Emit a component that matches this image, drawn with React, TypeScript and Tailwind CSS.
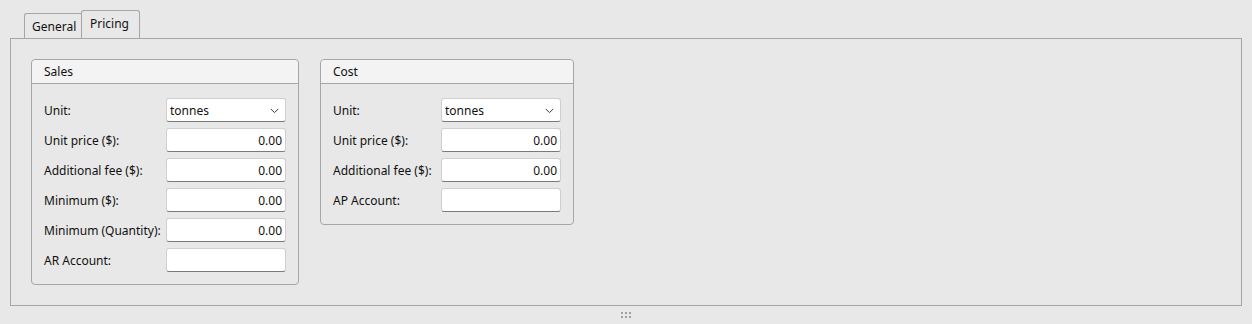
import React from "react";

const font = { fontFamily: '"Noto Sans", "Open Sans", sans-serif' };

function Chevron() {
  return (
    <svg width="9" height="6" viewBox="0 0 9 6" className="shrink-0">
      <path d="M0.8 1 L4.5 4.6 L8.2 1" fill="none" stroke="#3a3a3a" strokeWidth="1" />
    </svg>
  );
}

function Field({ kind, value }: { kind: "select" | "num" | "text"; value?: string }) {
  const base =
    "h-[24px] w-[120px] bg-white border border-[#cfcfcf] border-b-[#7a7a7a] rounded-[3px] flex items-center text-[12px] text-[#111111] pt-[1px]";
  if (kind === "select") {
    return (
      <div className={base + " pl-[3px] pr-[6px] justify-between"}>
        <span>{value}</span>
        <Chevron />
      </div>
    );
  }
  if (kind === "num") {
    return <div className={base + " pr-[3px] justify-end"}>{value}</div>;
  }
  return <div className={base} />;
}

type Row = { label: string; kind: "select" | "num" | "text"; value?: string };

function Group({
  title,
  rows,
  labelWidth,
  width,
}: {
  title: string;
  rows: Row[];
  labelWidth: string;
  width: string;
}) {
  return (
    <div className={"border border-[#a6a6a6] rounded-[4px] bg-[#e8e8e8] " + width}>
      <div className="h-[24px] bg-[#f3f3f3] border-b border-[#a6a6a6] rounded-t-[4px] pl-[12px] pt-[1px] flex items-center text-[12px] text-[#111111]">
        {title}
      </div>
      <div className="pt-[14px] pb-[12px] pl-[12px] pr-[12px] flex flex-col gap-[6px]">
        {rows.map((r) => (
          <div key={r.label} className="flex items-center">
            <div className={"text-[12px] text-[#111111] whitespace-nowrap pt-[2px] " + labelWidth}>{r.label}</div>
            <Field kind={r.kind} value={r.value} />
          </div>
        ))}
      </div>
    </div>
  );
}

export default function App() {
  const sales: Row[] = [
    { label: "Unit:", kind: "select", value: "tonnes" },
    { label: "Unit price ($):", kind: "num", value: "0.00" },
    { label: "Additional fee ($):", kind: "num", value: "0.00" },
    { label: "Minimum ($):", kind: "num", value: "0.00" },
    { label: "Minimum (Quantity):", kind: "num", value: "0.00" },
    { label: "AR Account:", kind: "text" },
  ];
  const cost: Row[] = [
    { label: "Unit:", kind: "select", value: "tonnes" },
    { label: "Unit price ($):", kind: "num", value: "0.00" },
    { label: "Additional fee ($):", kind: "num", value: "0.00" },
    { label: "AP Account:", kind: "text" },
  ];
  return (
    <div className="w-[1252px] h-[324px] bg-[#e8e8e8] flex flex-col" style={font}>
      <div className="pl-[24px] pt-[10px] flex items-end h-[38px]">
        <div className="h-[25px] w-[57px] border border-b-0 border-r-0 border-[#a6a6a6] rounded-tl-[3px] pl-[7px] pt-[4px] text-[12px] text-[#111111] bg-[#e8e8e8]">
          General
        </div>
        <div className="h-[28px] w-[59px] border border-b-0 border-[#a6a6a6] rounded-t-[3px] pl-[8px] pt-[4px] text-[12px] text-[#111111] bg-[#e8e8e8]">
          Pricing
        </div>
      </div>
      <div className="mx-[10px] h-[268px] border border-[#a6a6a6] pt-[20px] pl-[20px] flex items-start gap-[21px]">
        <Group title="Sales" rows={sales} labelWidth="w-[122px]" width="w-[268px]" />
        <Group title="Cost" rows={cost} labelWidth="w-[108px]" width="w-[254px]" />
      </div>
      <div className="flex-1 flex items-center justify-center">
        <div className="grid grid-cols-3 gap-[2px] mt-[-1px]">
          {[0, 1, 2, 3, 4, 5].map((i) => (
            <div key={i} className="w-[2px] h-[2px] bg-[#a0a0a0]" />
          ))}
        </div>
      </div>
    </div>
  );
}
